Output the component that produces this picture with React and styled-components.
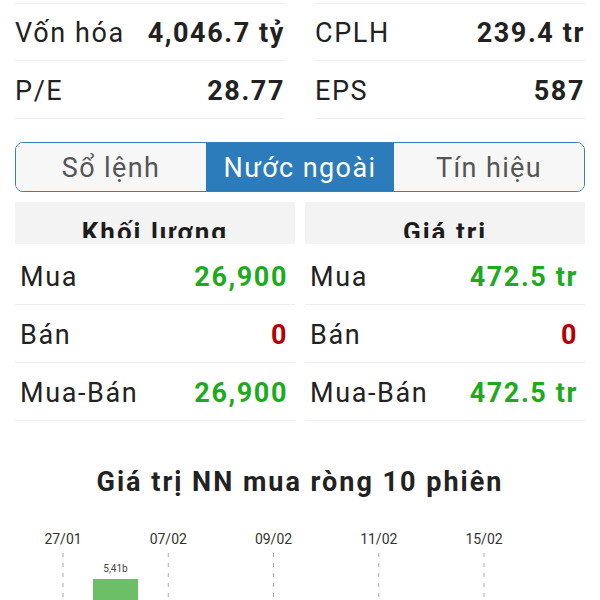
import React from "react";
import styled, { createGlobalStyle } from "styled-components";

const GlobalStyle = createGlobalStyle`
  body {
    margin: 0;
    background: #fff;
    font-family: Roboto, "Noto Sans", sans-serif;
    color: #222;
  }
`;

const Page = styled.div`
  width: 600px;
  padding: 0 15px;
  box-sizing: border-box;
`;

const StatGrid = styled.div`
  display: grid;
  grid-template-columns: 1fr 1fr;
  column-gap: 30px;
  margin-top: 3px;
`;

const StatCell = styled.div`
  display: flex;
  align-items: center;
  justify-content: space-between;
  box-sizing: border-box;
  height: 58px;
  padding-top: 2px;
  border-top: ${(p) => (p.first ? "1px solid #eee" : "none")};
  border-bottom: 1px solid #eee;
  font-size: 27px;
  letter-spacing: 1.6px;
`;

const Label = styled.span`
  font-weight: 400;
  color: #222;
`;

const Value = styled.span`
  font-weight: 700;
  color: ${(p) => p.color || "#222"};
`;

const Tabs = styled.div`
  display: flex;
  margin-top: 23px;
  height: 48px;
  border: 1.5px solid #3a80b8;
  border-radius: 8px;
  overflow: hidden;
`;

const Tab = styled.div`
  flex: ${(p) => p.grow};
  display: flex;
  align-items: center;
  justify-content: center;
  padding-top: 2px;
  font-size: 27px;
  letter-spacing: 1.4px;
  color: ${(p) => (p.active ? "#fff" : "#555")};
  background: ${(p) => (p.active ? "#2c7cbc" : "#f7f7f7")};
`;

const Blocks = styled.div`
  display: grid;
  grid-template-columns: 1fr 1fr;
  column-gap: 10px;
  margin-top: 10px;
`;

const Header = styled.div`
  height: 42px;
  background: #f3f3f3;
  display: flex;
  justify-content: center;
  margin-bottom: 3px;
`;

const HeaderText = styled.div`
  height: 21px;
  padding-top: 15px;
  line-height: 30px;
  overflow: hidden;
  font-size: 26px;
  font-weight: 700;
  letter-spacing: 2px;
  color: #1c1c1c;
`;

const Row = styled.div`
  display: flex;
  align-items: center;
  justify-content: space-between;
  height: 58px;
  padding: 2px 7px 0 5px;
  box-sizing: border-box;
  border-bottom: 1px solid #eee;
  font-size: 27px;
  letter-spacing: 1.6px;
`;

const ChartTitle = styled.h2`
  margin: 45px 0 0;
  text-align: center;
  font-size: 27px;
  line-height: 32px;
  font-weight: 700;
  letter-spacing: 2px;
  color: #222;
`;

const ChartBox = styled.div`
  margin: 23px -15px 0;
  height: 120px;
`;

const GREEN = "#1dab1d";
const RED = "#b50000";

const stats = [
  ["Vốn hóa", "4,046.7 tỷ"],
  ["CPLH", "239.4 tr"],
  ["P/E", "28.77"],
  ["EPS", "587"],
];

const blocks = [
  {
    title: "Khối lượng",
    rows: [
      ["Mua", "26,900", GREEN],
      ["Bán", "0", RED],
      ["Mua-Bán", "26,900", GREEN],
    ],
  },
  {
    title: "Giá trị",
    rows: [
      ["Mua", "472.5 tr", GREEN],
      ["Bán", "0", RED],
      ["Mua-Bán", "472.5 tr", GREEN],
    ],
  },
];

const dates = ["27/01", "07/02", "09/02", "11/02", "15/02"];

function Chart() {
  return (
    <svg width="600" height="120" viewBox="0 0 600 120">
      {dates.map((d, i) => {
        const x = 63 + i * 105.25;
        return (
          <g key={d}>
            <text
              x={x}
              y="23"
              textAnchor="middle"
              fontFamily="Roboto, sans-serif"
              fontSize="14"
              fill="#333"
            >
              {d}
            </text>
            <line
              x1={x}
              y1="32"
              x2={x}
              y2="120"
              stroke="#aaa"
              strokeWidth="1"
              strokeDasharray="4 6"
            />
          </g>
        );
      })}
      <text
        x="115.5"
        y="51"
        textAnchor="middle"
        fontFamily="Roboto, sans-serif"
        fontSize="10"
        fill="#444"
      >
        5,41b
      </text>
      <rect x="93" y="58" width="45" height="62" fill="#6cbf66" />
    </svg>
  );
}

export default function App() {
  return (
    <>
      <GlobalStyle />
      <Page>
        <StatGrid>
          {stats.map(([k, v], i) => (
            <StatCell key={k} first={i < 2}>
              <Label>{k}</Label>
              <Value>{v}</Value>
            </StatCell>
          ))}
        </StatGrid>

        <Tabs>
          <Tab grow="190">Sổ lệnh</Tab>
          <Tab grow="188" active>
            Nước ngoài
          </Tab>
          <Tab grow="190">Tín hiệu</Tab>
        </Tabs>

        <Blocks>
          {blocks.map((b) => (
            <div key={b.title}>
              <Header>
                <HeaderText>{b.title}</HeaderText>
              </Header>
              {b.rows.map(([k, v, c]) => (
                <Row key={k}>
                  <Label>{k}</Label>
                  <Value color={c}>{v}</Value>
                </Row>
              ))}
            </div>
          ))}
        </Blocks>

        <ChartTitle>Giá trị NN mua ròng 10 phiên</ChartTitle>
        <ChartBox>
          <Chart />
        </ChartBox>
      </Page>
    </>
  );
}
